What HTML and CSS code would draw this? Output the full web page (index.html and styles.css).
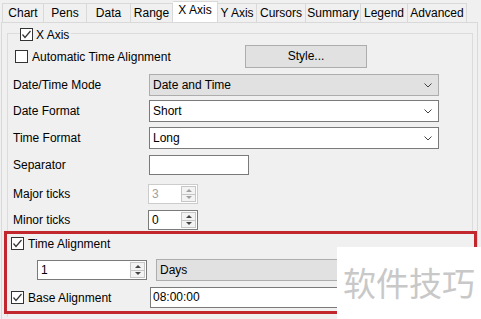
FILE: index.html
```html
<!DOCTYPE html>
<html lang="en">

<head>
    <meta charset="UTF-8">
    <title>X Axis</title>
    <link rel="stylesheet" href="styles.css">
</head>

<body>
    <div class="tabs">
        <div class="tab t-chart">Chart</div>
        <div class="tab t-pens">Pens</div>
        <div class="tab t-data">Data</div>
        <div class="tab t-range">Range</div>
        <div class="tab t-xaxis active">X Axis</div>
        <div class="tab t-yaxis">Y Axis</div>
        <div class="tab t-cursors">Cursors</div>
        <div class="tab t-summary">Summary</div>
        <div class="tab t-legend">Legend</div>
        <div class="tab t-advanced">Advanced</div>
    </div>

    <div class="panel">
        <div class="group">
            <div class="group-title">
                <span class="check"><svg width="13" height="13" viewBox="0 0 13 13"><polyline points="2.5,6.5 5,9.5 10.5,3" fill="none" stroke="#333" stroke-width="1.2"/></svg></span>
                <span>X Axis</span>
            </div>

            <div class="auto-row">
                <div class="checkline wide">
                    <span class="check"></span>
                    <span>Automatic Time Alignment</span>
                </div>
                <div class="btn">Style...</div>
            </div>

            <div class="form">
                <div class="lbl h22">Date/Time Mode</div>
                <div class="select gray">Date and Time
                    <svg class="chev" width="8" height="5" viewBox="0 0 8 5"><polyline points="0.5,0.5 4,4 7.5,0.5" fill="none" stroke="#444" stroke-width="1"/></svg>
                </div>

                <div class="lbl h22">Date Format</div>
                <div class="select">Short
                    <svg class="chev" width="8" height="5" viewBox="0 0 8 5"><polyline points="0.5,0.5 4,4 7.5,0.5" fill="none" stroke="#444" stroke-width="1"/></svg>
                </div>

                <div class="lbl h22">Time Format</div>
                <div class="select">Long
                    <svg class="chev" width="8" height="5" viewBox="0 0 8 5"><polyline points="0.5,0.5 4,4 7.5,0.5" fill="none" stroke="#444" stroke-width="1"/></svg>
                </div>

                <div class="lbl h20">Separator</div>
                <div class="textbox sep"></div>

                <div class="lbl h20">Major ticks</div>
                <div class="spin small disabled">
                    <span class="val">3</span>
                    <div class="arrows"><span class="up"></span><span class="down"></span></div>
                </div>

                <div class="lbl h20">Minor ticks</div>
                <div class="spin small">
                    <span class="val">0</span>
                    <div class="arrows"><span class="up"></span><span class="down"></span></div>
                </div>
            </div>

            <div class="highlight">
                <div class="checkline">
                    <span class="check"><svg width="13" height="13" viewBox="0 0 13 13"><polyline points="2.5,6.5 5,9.5 10.5,3" fill="none" stroke="#333" stroke-width="1.2"/></svg></span>
                    <span>Time Alignment</span>
                </div>

                <div class="align-row">
                    <div class="spin big">
                        <span class="val">1</span>
                        <div class="arrows"><span class="up"></span><span class="down"></span></div>
                    </div>
                    <div class="select gray days">Days</div>
                </div>

                <div class="base-row">
                    <div class="checkline base">
                        <span class="check"><svg width="13" height="13" viewBox="0 0 13 13"><polyline points="2.5,6.5 5,9.5 10.5,3" fill="none" stroke="#333" stroke-width="1.2"/></svg></span>
                        <span>Base Alignment</span>
                    </div>
                    <div class="textbox time">08:00:00</div>
                </div>
            </div>
        </div>
    </div>

    <div class="watermark">软件技巧</div>
</body>

</html>
```

FILE: styles.css
```css
body {
    margin: 0;
    width: 481px;
    height: 319px;
    overflow: hidden;
    position: relative;
    background-color: #f0f0f0;
    font-family: "Liberation Sans", Arial, sans-serif;
    font-size: 12px;
    color: #000;
}

/* tab strip */
.tabs {
    display: flex;
    align-items: flex-end;
    height: 22px;
    padding-left: 2px;
}

.tab {
    box-sizing: border-box;
    height: 19px;
    line-height: 18px;
    text-align: center;
    border: 1px solid #d9d9d9;
    border-left: none;
    border-bottom: none;
    background-color: #f0f0f0;
}

.tab.t-chart {
    border-left: 1px solid #d9d9d9;
    width: 42px;
}

.t-pens { width: 43px; }
.t-data { width: 44px; }
.t-range { width: 42px; }
.t-xaxis { width: 45px; }
.t-yaxis { width: 39px; }
.t-cursors { width: 49px; }
.t-summary { width: 55px; }
.t-legend { width: 47px; }
.t-advanced { width: 59px; }

.tab.active {
    height: 21px;
    line-height: 17px;
    background-color: #fff;
}

/* page */
.panel {
    box-sizing: border-box;
    margin-left: 1px;
    width: 477px;
    height: 297px;
    border: 1px solid #d9d9d9;
    border-bottom: none;
    padding-top: 10px;
}

.group {
    box-sizing: border-box;
    margin-left: 5px;
    width: 466px;
    height: 284px;
    border: 1px solid #dcdcdc;
    border-bottom: none;
    padding-left: 5px;
}

.group-title {
    display: flex;
    align-items: center;
    gap: 3px;
    width: fit-content;
    margin: -6px 0 0 7px;
    padding-right: 2px;
    height: 13px;
    background-color: #f0f0f0;
}

.check {
    box-sizing: border-box;
    display: inline-block;
    width: 13px;
    height: 13px;
    border: 1px solid #333;
    background-color: #fff;
    flex-shrink: 0;
}

.check svg {
    display: block;
    margin: -1px;
}

.checkline {
    display: flex;
    align-items: center;
    gap: 4px;
    height: 13px;
}

.auto-row {
    display: flex;
    align-items: center;
    height: 23px;
    margin-top: 4px;
}

.checkline.wide {
    width: 230px;
    padding-left: 2px;
}

.btn {
    box-sizing: border-box;
    width: 122px;
    height: 23px;
    line-height: 21px;
    text-align: center;
    background-color: #e1e1e1;
    border: 1px solid #adadad;
}

/* form grid */
.form {
    display: grid;
    grid-template-columns: 136px 1fr;
    grid-template-rows: 26px 27px 28px 29px 26px 21px;
    align-items: start;
    margin-top: 6px;
}

.lbl.h22 { line-height: 22px; }
.lbl.h20 { line-height: 20px; }

.select {
    box-sizing: border-box;
    position: relative;
    width: 290px;
    height: 22px;
    line-height: 20px;
    padding-left: 3px;
    background-color: #fff;
    border: 1px solid #7a7a7a;
}

.select.gray {
    background-color: #e1e1e1;
    border-color: #adadad;
}

.chev {
    position: absolute;
    right: 6px;
    top: 8px;
}

.textbox {
    box-sizing: border-box;
    height: 20px;
    line-height: 18px;
    padding-left: 2px;
    background-color: #fff;
    border: 1px solid #7a7a7a;
}

.textbox.sep {
    width: 100px;
}

.spin {
    box-sizing: border-box;
    display: flex;
    align-items: center;
    height: 20px;
    background-color: #fff;
    border: 1px solid #7a7a7a;
}

.spin.small {
    width: 50px;
    margin-left: -1px;
}

.spin .val {
    flex: 1;
    padding-left: 3px;
}

.arrows {
    box-sizing: border-box;
    display: flex;
    flex-direction: column;
    width: 15px;
    height: 16px;
    margin-right: 1px;
    border: 1px solid #c6c6c6;
    background-color: #f3f3f3;
}

.arrows span {
    flex: 1;
    display: flex;
    justify-content: center;
    align-items: center;
}

.arrows span::after {
    content: "";
    border-left: 3px solid transparent;
    border-right: 3px solid transparent;
}

.arrows .up::after {
    border-bottom: 3px solid #444;
}

.arrows .down {
    border-top: 1px solid #c6c6c6;
}

.arrows .down::after {
    border-top: 3px solid #444;
}

.spin.disabled {
    border-color: #cccccc;
    color: #a0a0a0;
}

.spin.disabled .arrows span::after {
    border-bottom-color: #a0a0a0;
    border-top-color: #a0a0a0;
}

/* red annotation box */
.highlight {
    box-sizing: border-box;
    height: 83px;
    margin: 0 -5px 0 -9px;
    padding: 3px 0 0 4px;
    border: 3px solid #c2272d;
    background-color: #f0f0f0;
}

.align-row {
    display: flex;
    align-items: flex-start;
    height: 22px;
    margin-top: 9px;
}

.spin.big {
    width: 110px;
    margin: 1px 0 0 26px;
}

.select.days {
    width: 283px;
    margin-left: 9px;
}

.base-row {
    display: flex;
    align-items: center;
    height: 21px;
    margin-top: 6px;
}

.checkline.base {
    width: 139px;
}

.textbox.time {
    width: 288px;
    height: 21px;
    line-height: 19px;
}

.watermark {
    position: absolute;
    left: 337px;
    top: 247px;
    width: 144px;
    height: 72px;
    background-color: #fff;
    color: #c8c8c8;
    font-family: "Noto Sans CJK SC", sans-serif;
    font-size: 33px;
    line-height: 70px;
    text-align: center;
}
```
